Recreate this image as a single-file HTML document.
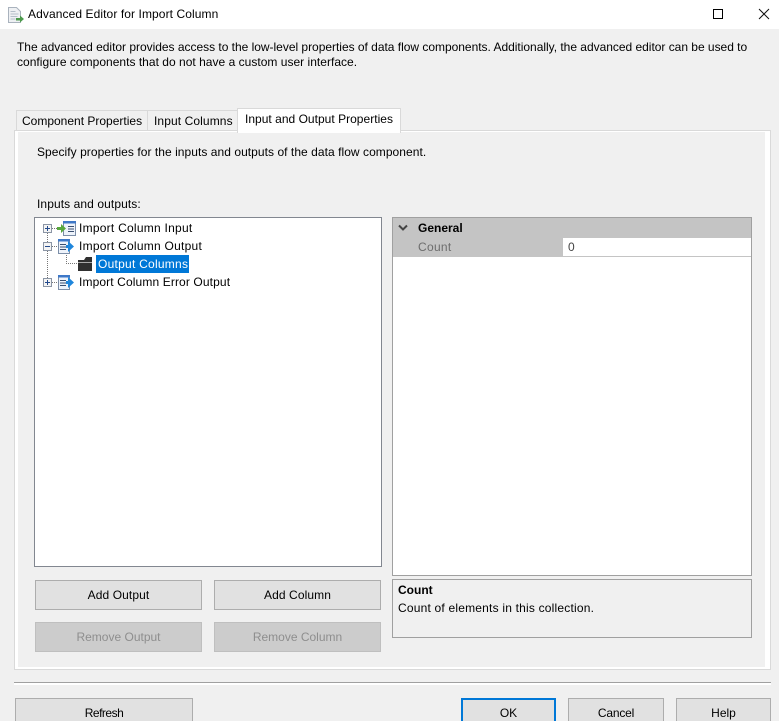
<!DOCTYPE html>
<html><head><meta charset="utf-8"><style>
html,body{margin:0;padding:0;width:779px;height:721px;overflow:hidden}
body{background:#f0f0f0;position:relative;font:12px "Liberation Sans",sans-serif;color:#000}
div,span.t{position:absolute;box-sizing:border-box}
span.t{white-space:nowrap;line-height:16px}
.btn{background:#e1e1e1;border:1px solid #adadad;display:flex;align-items:center;justify-content:center;white-space:nowrap}
.dis{background:#cccccc;border-color:#bfbfbf;color:#8e8e8e}
</style></head><body>
<div style="left:0;top:0;width:779px;height:29px;background:#fff"></div>
<svg style="position:absolute;left:7px;top:6px" width="18" height="18" viewBox="0 0 18 18"><path d="M1.500 1.500h8l4 4v11h-12z" fill="#eef0f3" stroke="#a9b2bd"/><path d="M3.500 5.500h5M3.500 8h8M3.500 10.500h7M3.500 13h5" stroke="#b4bec9"/><path d="M9 12h4v-2.500l4 3.500-4 3.500v-2h-4z" fill="#4c9a4c"/></svg>
<span class="t" style="left:28px;top:6px;letter-spacing:.09px">Advanced Editor for Import Column</span>
<svg style="position:absolute;left:660px;top:6px" width="110" height="16"><rect x="53.500" y="3.500" width="9" height="9" fill="none" stroke="#000"/><path d="M99 3l10 10M109 3l-10 10" stroke="#111" fill="none"/></svg>

<span class="t" style="left:17px;top:39px;letter-spacing:-.02px">The advanced editor provides access to the low-level properties of data flow components. Additionally, the advanced editor can be used to</span>
<span class="t" style="left:17px;top:54px;letter-spacing:.02px">configure components that do not have a custom user interface.</span>

<div style="left:16px;top:110px;width:132px;height:21px;border:1px solid #d9d9d9;border-bottom:0;background:#f0f0f0"></div>
<span class="t" style="left:22px;top:113px;letter-spacing:0">Component Properties</span>
<div style="left:147px;top:110px;width:91px;height:21px;border:1px solid #d9d9d9;border-bottom:0;background:#f0f0f0"></div>
<span class="t" style="left:154px;top:113px;letter-spacing:.1px">Input Columns</span>

<div style="left:14px;top:130px;width:757px;height:540px;border:1px solid #d9d9d9;background:#fff"></div>
<div style="left:18px;top:132px;width:747px;height:535px;background:#f0f0f0"></div>
<div style="left:237px;top:108px;width:164px;height:25px;border:1px solid #d9d9d9;border-bottom:0;background:#fff"></div>
<span class="t" style="left:245px;top:111px;letter-spacing:.02px">Input and Output Properties</span>
<div style="left:238px;top:132px;width:162px;height:1px;background:#fff"></div>

<span class="t" style="left:37px;top:144px;letter-spacing:.05px">Specify properties for the inputs and outputs of the data flow component.</span>
<span class="t" style="left:37px;top:196px;letter-spacing:.09px">Inputs and outputs:</span>

<div style="left:34px;top:217px;width:348px;height:350px;border:1px solid #828790;background:#fff"></div>
<svg style="position:absolute;left:40px;top:219px" width="60" height="72" shape-rendering="crispEdges">
<path d="M7.500 14v9M7.500 32v27M12 9.500h5M12 27.500h5M12 63.500h5M26.500 34v11M26 44.500h12" stroke="#777" stroke-dasharray="1 1" fill="none"/>
<g fill="#f4f4f4" stroke="#8b95a5"><rect x="3.500" y="5.500" width="8" height="8"/><rect x="3.500" y="23.500" width="8" height="8"/><rect x="3.500" y="59.500" width="8" height="8"/></g>
<path d="M5 9.500h5M7.500 7v5M5 27.500h5M5 63.500h5M7.500 61v5" stroke="#234a8c"/>
<g shape-rendering="auto">
<path d="M23.500 2.500h12v14h-12z" fill="#eef3fb" stroke="#7c8ea8"/><path d="M23 2h13v2.500h-13z" fill="#3e78c8"/><path d="M28 7.500h6M28 10h6M28 12.500h6" stroke="#3a4f70"/><path d="M17 8h4V5l5 4.500-5 4.500v-3h-4z" fill="#59a83e"/>
<path d="M18.500 20.500h11v14h-11z" fill="#eef3fb" stroke="#7c8ea8"/><path d="M18 20h12v2.500h-12z" fill="#3e78c8"/><path d="M20 25.500h6M20 28h6M20 30.500h6" stroke="#3a4f70"/><path d="M26 26h2v-4l6 5.500-6 5.500v-4h-2z" fill="#1f86dc"/>
<path d="M18.500 56.500h11v14h-11z" fill="#eef3fb" stroke="#7c8ea8"/><path d="M18 56h12v2.500h-12z" fill="#3e78c8"/><path d="M20 61.500h6M20 64h6M20 66.500h6" stroke="#3a4f70"/><path d="M26 62h2v-4l6 5.500-6 5.500v-4h-2z" fill="#1f86dc"/>
<path d="M38 41h6l2-3h6v14H38z" fill="#303030"/><path d="M38 43h14v1H38z" fill="#aaa"/>
</g></svg>
<span class="t" style="left:79px;top:220px;letter-spacing:.25px">Import Column Input</span>
<span class="t" style="left:79px;top:238px;letter-spacing:.25px">Import Column Output</span>
<div style="left:96px;top:255px;width:93px;height:18px;background:#0078d7"></div>
<span class="t" style="left:98px;top:256px;color:#fff;letter-spacing:.25px">Output Columns</span>
<span class="t" style="left:79px;top:274px;letter-spacing:.12px">Import Column Error Output</span>

<div style="left:392px;top:217px;width:360px;height:359px;border:1px solid #a0a0a0;background:#fff"></div>
<div style="left:393px;top:218px;width:358px;height:20px;background:#c4c4c4"></div>
<div style="left:393px;top:238px;width:170px;height:19px;background:#c4c4c4"></div>
<div style="left:563px;top:256px;width:188px;height:1px;background:#c4c4c4"></div>
<svg style="position:absolute;left:398px;top:224px" width="12" height="8"><path d="M1 1.500l4 4 4-4" fill="none" stroke="#444" stroke-width="2"/></svg>
<span class="t" style="left:418px;top:220px;font-weight:bold">General</span>
<span class="t" style="left:418px;top:239px;color:#6d6d6d;letter-spacing:.3px">Count</span>
<span class="t" style="left:568px;top:239px;color:#444">0</span>

<div style="left:392px;top:579px;width:360px;height:59px;border:1px solid #a0a0a0;background:#f0f0f0"></div>
<span class="t" style="left:398px;top:582px;font-weight:bold">Count</span>
<span class="t" style="left:398px;top:600px;letter-spacing:.2px">Count of elements in this collection.</span>

<div class="btn" style="left:35px;top:580px;width:167px;height:30px;letter-spacing:.1px">Add Output</div>
<div class="btn" style="left:214px;top:580px;width:167px;height:30px;letter-spacing:.1px">Add Column</div>
<div class="btn dis" style="left:35px;top:622px;width:167px;height:30px">Remove Output</div>
<div class="btn dis" style="left:214px;top:622px;width:167px;height:30px">Remove Column</div>

<div style="left:14px;top:682px;width:757px;height:1px;background:#a0a0a0"></div>
<div style="left:14px;top:683px;width:757px;height:2px;background:#fff"></div>
<div class="btn" style="left:15px;top:698px;width:178px;height:30px;letter-spacing:-.5px">Refresh</div>
<div class="btn" style="left:461px;top:698px;width:95px;height:30px;border:2px solid #0078d7">OK</div>
<div class="btn" style="left:568px;top:698px;width:96px;height:30px;letter-spacing:-.2px">Cancel</div>
<div class="btn" style="left:676px;top:698px;width:95px;height:30px">Help</div>
</body></html>
